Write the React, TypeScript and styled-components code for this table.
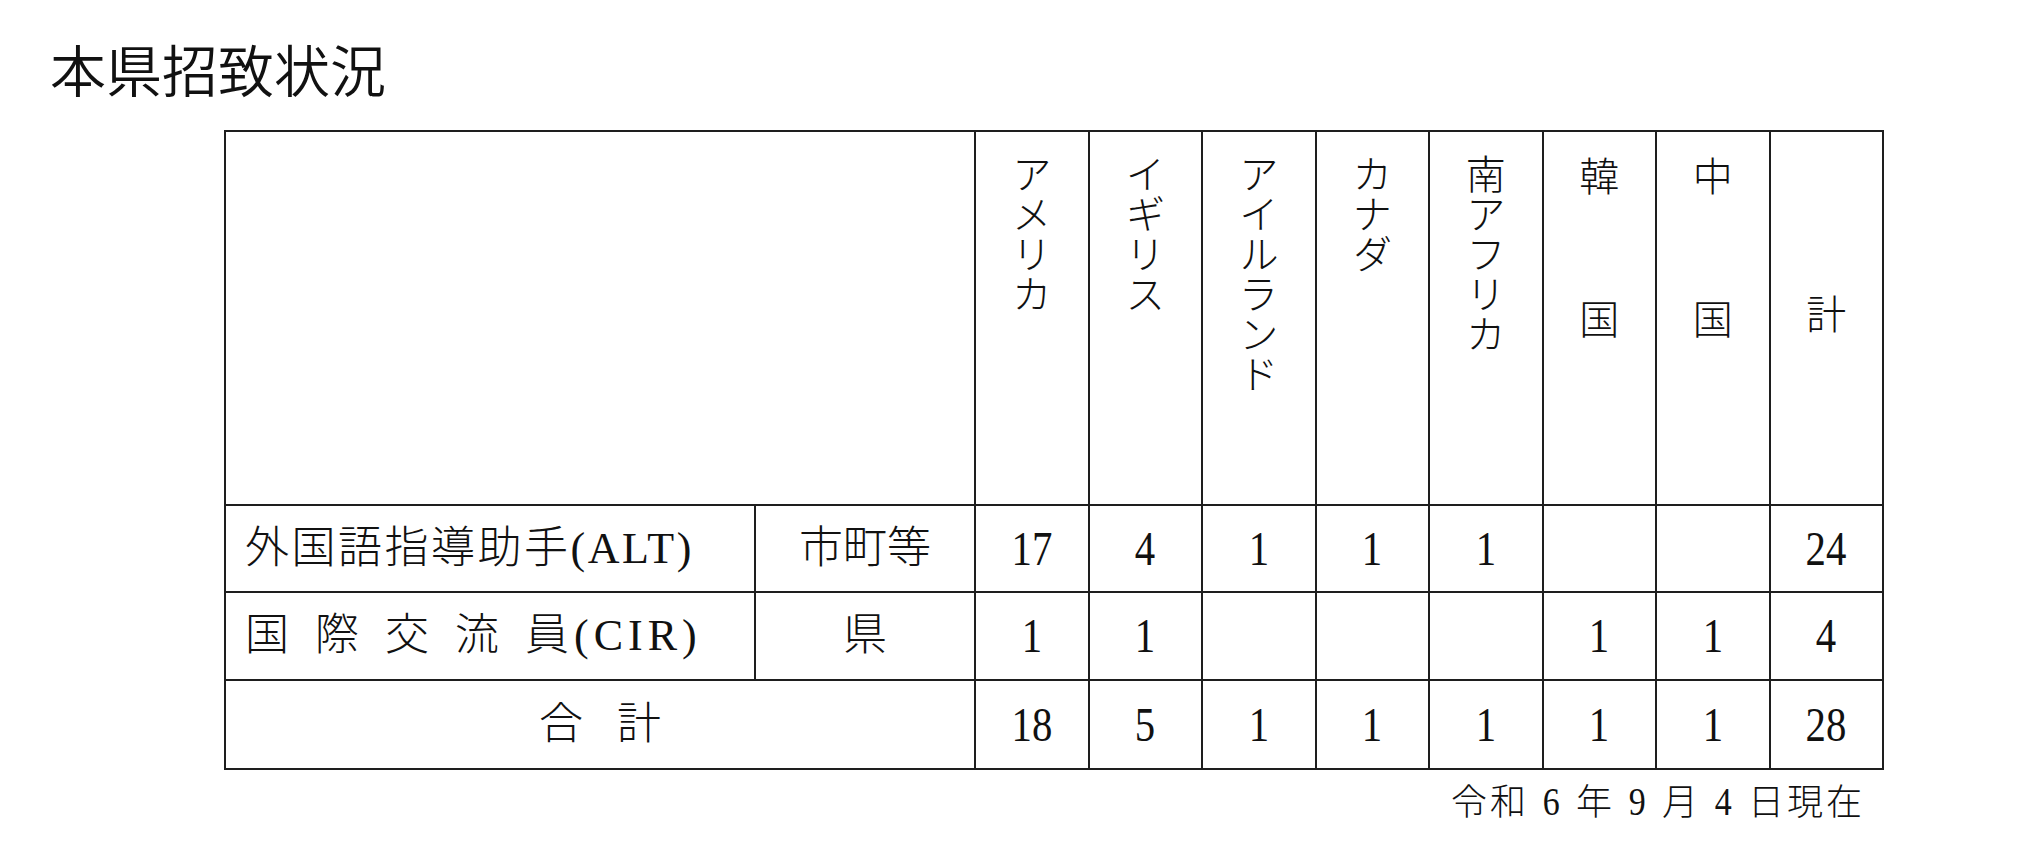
import React from "react";
import styled, { createGlobalStyle } from "styled-components";

const GlobalStyle = createGlobalStyle`
  html, body {
    margin: 0;
    padding: 0;
    background: #fff;
  }
  body {
    font-family: "Liberation Serif", "Noto Sans CJK JP", serif;
    color: #111;
  }
`;

const Page = styled.div`
  width: 2023px;
  height: 860px;
  overflow: hidden;
`;

const Title = styled.h1`
  margin: 0;
  padding: 40px 0 0 50px;
  font-family: "Noto Sans CJK JP", sans-serif;
  font-size: 56px;
  font-weight: 350;
  line-height: 1;
`;

const TableWrap = styled.div`
  margin: 34px 0 0 224px;
  width: 1658px;
`;

const Grid = styled.table`
  width: 1658px;
  border-collapse: collapse;
  table-layout: fixed;
`;

const Cell = styled.td<{ $align?: "left" | "center"; $top?: boolean }>`
  border: 2px solid #1e1e1e;
  padding: ${(p) => (p.$top ? "22px 0 0" : "0")};
  padding-left: ${(p) => (p.$align === "left" ? "19px" : "0")};
  text-align: ${(p) => p.$align || "center"};
  vertical-align: ${(p) => (p.$top ? "top" : "middle")};
  font-size: 44px;
  font-weight: 300;
  line-height: 1;
  white-space: nowrap;
`;

const HeadRow = styled.tr`
  height: 374px;
`;

const BodyRow = styled.tr<{ $h: number }>`
  height: ${(p) => p.$h}px;
`;

const Vertical = styled.span`
  display: inline-block;
  writing-mode: vertical-rl;
  text-orientation: upright;
  font-family: "Noto Sans CJK JP", sans-serif;
  font-size: 40px;
  font-weight: 300;
  line-height: 1;
`;

const Stack = styled.div<{ $gap: number }>`
  display: flex;
  flex-direction: column;
  align-items: center;
  gap: ${(p) => p.$gap}px;
  font-family: "Noto Sans CJK JP", sans-serif;
  font-size: 40px;
  font-weight: 300;
  line-height: 1;
`;

const Spaced = styled.span<{ $ls: number }>`
  letter-spacing: ${(p) => p.$ls}px;
`;

const Num = styled.span<{ $size?: number }>`
  display: inline-block;
  font-family: "Liberation Serif", serif;
  font-size: ${(p) => p.$size || 48}px;
  font-weight: 400;
  transform: scaleX(0.85);
`;

const DateLine = styled.div`
  margin-top: 12px;
  padding-right: 17px;
  text-align: right;
  font-size: 36px;
  font-weight: 300;
  line-height: 1;
  letter-spacing: 3px;
`;

const countries = ["アメリカ", "イギリス", "アイルランド", "カナダ", "南アフリカ"];

const rows: { values: (number | null)[]; h: number }[] = [
  { values: [17, 4, 1, 1, 1, null, null, 24], h: 87 },
  { values: [1, 1, null, null, null, 1, 1, 4], h: 88 },
  { values: [18, 5, 1, 1, 1, 1, 1, 28], h: 89 },
];

const Values: React.FC<{ values: (number | null)[] }> = ({ values }) => (
  <>
    {values.map((v, i) => (
      <Cell key={i}>{v !== null && <Num>{v}</Num>}</Cell>
    ))}
  </>
);

export default function App() {
  return (
    <Page>
      <GlobalStyle />
      <Title>本県招致状況</Title>
      <TableWrap>
        <Grid>
          <colgroup>
            <col style={{ width: 530 }} />
            <col style={{ width: 220 }} />
            {Array.from({ length: 8 }).map((_, i) => (
              <col key={i} style={{ width: 113.5 }} />
            ))}
          </colgroup>
          <tbody>
            <HeadRow>
              <Cell colSpan={2} />
              {countries.map((c) => (
                <Cell key={c} $top>
                  <Vertical>{c}</Vertical>
                </Cell>
              ))}
              <Cell $top>
                <Stack $gap={103}>
                  <span>韓</span>
                  <span>国</span>
                </Stack>
              </Cell>
              <Cell $top>
                <Stack $gap={103}>
                  <span>中</span>
                  <span>国</span>
                </Stack>
              </Cell>
              <Cell>
                <Vertical>計</Vertical>
              </Cell>
            </HeadRow>
            <BodyRow $h={rows[0].h}>
              <Cell $align="left">
                <Spaced $ls={2.5}>外国語指導助手(ALT)</Spaced>
              </Cell>
              <Cell>市町等</Cell>
              <Values values={rows[0].values} />
            </BodyRow>
            <BodyRow $h={rows[1].h}>
              <Cell $align="left">
                <Spaced $ls={26}>国際交流</Spaced>
                <Spaced $ls={5}>員(CIR)</Spaced>
              </Cell>
              <Cell>県</Cell>
              <Values values={rows[1].values} />
            </BodyRow>
            <BodyRow $h={rows[2].h}>
              <Cell colSpan={2}>
                <Spaced $ls={34}>合</Spaced>計
              </Cell>
              <Values values={rows[2].values} />
            </BodyRow>
          </tbody>
        </Grid>
        <DateLine>
          令和 <Num $size={40}>6</Num> 年 <Num $size={40}>9</Num> 月{" "}
          <Num $size={40}>4</Num> 日現在
        </DateLine>
      </TableWrap>
    </Page>
  );
}
